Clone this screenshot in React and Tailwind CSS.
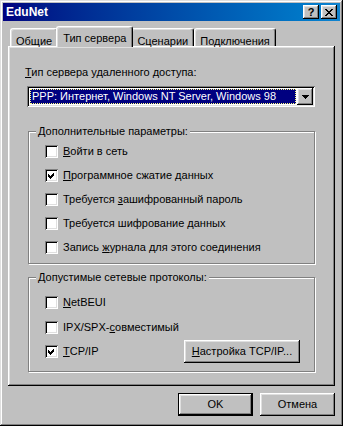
const RAISED =
  "shadow-[inset_-1px_-1px_#000,inset_1px_1px_#fff,inset_-2px_-2px_#808080,inset_2px_2px_#dfdfdf]";
const SUNKEN =
  "shadow-[inset_1px_1px_#808080,inset_-1px_-1px_#fff,inset_2px_2px_#000,inset_-2px_-2px_#dfdfdf]";

const CheckBox = ({ checked }) => (
  <span className={`block w-[13px] h-[13px] shrink-0 bg-white ${SUNKEN}`}>
    {checked && (
      <svg width="13" height="13" viewBox="0 0 13 13" shapeRendering="crispEdges">
        <path d="M3 5L5 7L9 3L9 6L5 10L3 8Z" fill="#000" />
      </svg>
    )}
  </span>
);

const CheckRow = ({ checked, children }) => (
  <div className="flex items-center gap-[5px] h-[13px]">
    <CheckBox checked={checked} />
    <span className="leading-[13px]">{children}</span>
  </div>
);

const GroupBox = ({ title, className, children }) => (
  <div
    className={`relative ml-[3px] w-[287px] border border-[#808080] shadow-[inset_1px_1px_#fff,1px_1px_#fff] ${className}`}
  >
    <span className="absolute left-[7px] top-[-7px] bg-[#c0c0c0] px-[2px] leading-[13px]">{title}</span>
    {children}
  </div>
);

const Tab = ({ active, children }) =>
  active ? (
    <div className="relative z-10 -mx-[2px] -mb-px h-[21px] px-[6px] pt-[3px] rounded-t-[3px] bg-[#c0c0c0] border-t border-l border-white border-r border-r-black shadow-[inset_-1px_0_#808080,inset_1px_1px_#dfdfdf]">
      {children}
    </div>
  ) : (
    <div className="h-[18px] px-[5px] pt-[4px] rounded-t-[3px] bg-[#c0c0c0] border-t border-l border-white border-r border-r-black shadow-[inset_-1px_0_#808080,inset_1px_1px_#dfdfdf]">
      {children}
    </div>
  );

const Button = ({ children, isDefault, className }) => (
  <div
    className={`flex items-center justify-center h-[23px] w-[75px] bg-[#c0c0c0] ${
      isDefault
        ? "border border-black shadow-[inset_-1px_-1px_#000,inset_1px_1px_#fff,inset_-2px_-2px_#808080,inset_2px_2px_#dfdfdf]"
        : RAISED
    } ${className || ""}`}
  >
    {children}
  </div>
);

export default function App() {
  return (
    <div className="w-[343px] h-[426px] bg-[#c0c0c0] p-[3px] text-[11px] text-black font-['Liberation_Sans',Arial,sans-serif] shadow-[inset_-1px_-1px_#000,inset_1px_1px_#dfdfdf,inset_-2px_-2px_#808080,inset_2px_2px_#fff]">
      <div className="flex items-center h-[18px] pl-[3px] pr-[3px] bg-gradient-to-r from-[#000080] to-[#1084d0]">
        <span className="flex-1 font-bold text-white text-[12px]">EduNet</span>
        <div className={`flex items-center justify-center w-[16px] h-[14px] bg-[#c0c0c0] ${RAISED}`}>
          <span className="font-bold text-[11px] leading-none mt-[1px]">?</span>
        </div>
        <div className={`ml-[2px] flex items-center justify-center w-[16px] h-[14px] bg-[#c0c0c0] ${RAISED}`}>
          <svg width="8" height="7" viewBox="0 0 8 7" shapeRendering="crispEdges">
            <path
              d="M0 0h2v1h1v1h2V1h1V0h2v1H7v1H6v1H5v1h1v1h1v1h1v1H6V6H5V5H3v1H2v1H0V6h1V5h1V4h1V3H2V2H1V1H0z"
              fill="#000"
            />
          </svg>
        </div>
      </div>

      <div className="px-[5px]">
        <div className="flex items-end h-[20px] mt-[5px] pl-[2px]">
          <Tab>Общие</Tab>
          <Tab active>Тип сервера</Tab>
          <Tab>Сценарии</Tab>
          <Tab>Подключения</Tab>
        </div>

        <div className="h-[340px] pt-[20px] pl-[17px] shadow-[inset_-1px_-1px_#000,inset_1px_1px_#fff,inset_-2px_-2px_#808080,inset_2px_2px_#dfdfdf]">
          <div className="leading-[13px]">
            <u>Т</u>ип сервера удаленного доступа:
          </div>

          <div className={`mt-[7px] ml-[2px] w-[288px] h-[21px] flex items-center p-[2px] bg-white ${SUNKEN}`}>
            <div className="flex-1 h-[17px] p-[1px] pl-[1px]">
              <div className="h-full bg-[#000080] text-white leading-[15px] pl-[2px] outline outline-1 outline-dotted outline-[#ffff80] -outline-offset-1">
                PPP: Интернет, Windows NT Server, Windows 98
              </div>
            </div>
            <div className={`w-[16px] h-[17px] flex items-center justify-center bg-[#c0c0c0] ${RAISED}`}>
              <svg width="7" height="4" viewBox="0 0 7 4" shapeRendering="crispEdges">
                <path d="M0 0h7v1H6v1H5v1H4v1H3V3H2V2H1V1H0z" fill="#000" />
              </svg>
            </div>
          </div>

          <GroupBox title="Дополнительные параметры:" className="mt-[24px] h-[133px] pt-[13px] pl-[16px]">
            <div className="flex flex-col gap-[11px]">
              <CheckRow>
                <u>В</u>ойти в сеть
              </CheckRow>
              <CheckRow checked>
                <u>П</u>рограммное сжатие данных
              </CheckRow>
              <CheckRow>
                Требуется <u>з</u>ашифрованный пароль
              </CheckRow>
              <CheckRow>
                Требуется шифрование <u>д</u>анных
              </CheckRow>
              <CheckRow>
                Запись <u>ж</u>урнала для этого соединения
              </CheckRow>
            </div>
          </GroupBox>

          <GroupBox title="Допустимые сетевые протоколы:" className="mt-[13px] h-[95px] pt-[18px] pl-[16px]">
            <div className="flex flex-col gap-[12px]">
              <CheckRow>
                <u>N</u>etBEUI
              </CheckRow>
              <CheckRow>
                IPX/SPX-<u>с</u>овместимый
              </CheckRow>
              <div className="flex items-center h-[13px] -mt-[1px]">
                <CheckBox checked />
                <span className="ml-[5px] flex-1">
                  <u>T</u>CP/IP
                </span>
                <Button className="w-[116px] mr-[14px]">
                  <span>
                    <u>Н</u>астройка TCP/IP...
                  </span>
                </Button>
              </div>
            </div>
          </GroupBox>
        </div>

        <div className="flex justify-end gap-[7px] mt-[7px]">
          <Button isDefault>OK</Button>
          <Button>Отмена</Button>
        </div>
      </div>
    </div>
  );
}
